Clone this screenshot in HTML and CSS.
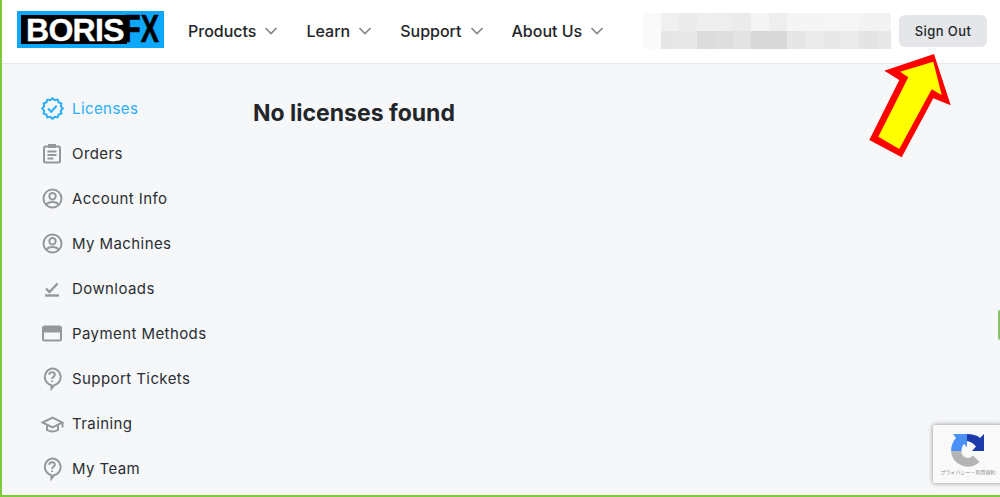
FILE: index.html
```html
<!DOCTYPE html>
<html lang="en">
<head>
  <meta charset="UTF-8">
  <title>Boris FX - Licenses</title>
  <link rel="stylesheet" href="styles.css">
</head>
<body>
  <header>
    <a class="logo" href="#"><span class="logo-boris">BORIS</span><span class="logo-fx">FX</span></a>
    <nav>
      <a href="#">Products <svg class="chev" viewBox="0 0 12 8"><path d="M.5 1l5.500 5.500L11.500 1"/></svg></a>
      <a href="#">Learn <svg class="chev" viewBox="0 0 12 8"><path d="M.5 1l5.500 5.500L11.500 1"/></svg></a>
      <a href="#">Support <svg class="chev" viewBox="0 0 12 8"><path d="M.5 1l5.500 5.500L11.500 1"/></svg></a>
      <a href="#">About Us <svg class="chev" viewBox="0 0 12 8"><path d="M.5 1l5.500 5.500L11.500 1"/></svg></a>
    </nav>
    <div class="blurred"></div>
    <button class="signout">Sign Out</button>
  </header>

  <main>
    <aside>
      <a class="side-item active" href="#">
        <svg viewBox="0 0 24 24"><polygon points="22.8,11.500 20.800,13.700 21.400,16.650 18.600,17.600 17.650,20.400 14.700,19.800 12.500,21.800 10.300,19.800 7.350,20.400 6.400,17.600 3.600,16.650 4.200,13.700 2.200,11.500 4.200,9.300 3.600,6.350 6.400,5.400 7.350,2.600 10.300,3.200 12.500,1.200 14.700,3.200 17.650,2.600 18.600,5.400 21.400,6.350 20.800,9.300"/><path d="M8 11.500l3.200 3.200 5.500-6"/></svg>
        Licenses
      </a>
      <a class="side-item" href="#">
        <svg viewBox="0 0 24 24"><rect x="4" y="4.500" width="16" height="16" rx="1.500"/><path class="thick" d="M8 4h8"/><path d="M7.500 9.500h9M7.500 13h9M7.500 16.500h6"/></svg>
        Orders
      </a>
      <a class="side-item" href="#">
        <svg viewBox="0 0 24 24"><circle cx="12.500" cy="11.500" r="9"/><circle cx="12.500" cy="9.200" r="3.200"/><path d="M6 18c1.500-2.500 4-3 6.500-3s5 .5 6.500 3"/></svg>
        Account Info
      </a>
      <a class="side-item" href="#">
        <svg viewBox="0 0 24 24"><circle cx="12.500" cy="11.500" r="9"/><circle cx="12.500" cy="9.200" r="3.200"/><path d="M6 18c1.500-2.500 4-3 6.500-3s5 .5 6.500 3"/></svg>
        My Machines
      </a>
      <a class="side-item" href="#">
        <svg class="heavy" viewBox="0 0 24 24"><path d="M6 11.500l3.500 3.500 8-8.500"/><path d="M5 18.500h14"/></svg>
        Downloads
      </a>
      <a class="side-item" href="#">
        <svg viewBox="0 0 24 24"><rect x="3" y="4.500" width="18" height="14" rx="1.500"/><path class="band" d="M3 7.500h18"/></svg>
        Payment Methods
      </a>
      <a class="side-item" href="#">
        <svg viewBox="0 0 24 24"><path d="M12 1.500a8.500 8.500 0 0 1 2 16.800l-2.500 3.200v-3.300A8.500 8.500 0 0 1 12 1.500z"/><path d="M9.300 7.800c0-3.300 5.500-3.300 5.500 0 0 2-2.700 2-2.700 4.200"/><path d="M12.100 13.500v1.500"/></svg>
        Support Tickets
      </a>
      <a class="side-item" href="#">
        <svg viewBox="0 0 24 24"><path d="M2.500 10.500l10-5 10 5-10 5z"/><path d="M7 13.500v4.500c3.500 2 7.500 2 11 0v-4.500"/><path d="M22.500 10.500v5"/></svg>
        Training
      </a>
      <a class="side-item" href="#">
        <svg viewBox="0 0 24 24"><path d="M12 1.500a8.500 8.500 0 0 1 2 16.800l-2.500 3.200v-3.300A8.500 8.500 0 0 1 12 1.500z"/><path d="M9.300 7.800c0-3.300 5.500-3.300 5.500 0 0 2-2.700 2-2.700 4.200"/><path d="M12.100 13.500v1.500"/></svg>
        My Team
      </a>
    </aside>
    <section class="content">
      <h1>No licenses found</h1>
    </section>
  </main>

  <!-- annotation arrow drawn over the screenshot -->
  <svg class="arrow" viewBox="0 0 100 110">
    <polygon fill="#ff0000" points="70,2 20.300,18.700 35.300,28 5.300,88 37.700,105.300 69.300,46.300 86.700,53.300"/>
    <polygon fill="#ffff00" points="69.300,9.700 36,19.700 44.300,25.300 14.300,84.700 35.300,97 67.700,37.300 77.700,43"/>
  </svg>

  <div class="side-tab"></div>

  <div class="recaptcha">
    <svg viewBox="0 0 36 36">
      <path fill="#b4b4b4" d="M1 20h10.500a6.500 6.500 0 0 0 11.500 4.500l6.500 6.500A17 17 0 0 1 1 20z"/>
      <path fill="#4a90f5" d="M1 20c0-5 2-10 5-13L3 3h14v13l-3-3c-1.500 1.500-2.500 4-2.500 7z"/>
      <path fill="#1c3aa9" d="M17 3c5 0 10 1 13 4l4-4v17H22l4-4.500C24 13 21 10.500 17 10z"/>
    </svg>
    <span class="recaptcha-links">プライバシー・利用規約</span>
  </div>
</body>
</html>
```

FILE: styles.css
```css
* {
  box-sizing: border-box;
  margin: 0;
  padding: 0;
}

html, body {
  height: 497px;
  overflow: hidden;
}

body {
  font-family: Inter, "Noto Sans", sans-serif;
  background: #f6f7f9;
  color: #222629;
  border-left: 2px solid #7ecb3a;
  border-bottom: 2px solid #7ecb3a;
  position: relative;
}

a {
  color: inherit;
  text-decoration: none;
}

header {
  height: 64px;
  background: #fff;
  border-bottom: 1px solid #e8e9eb;
  display: flex;
  align-items: center;
  padding-left: 15px;
  padding-bottom: 2px;
}

.logo {
  width: 147px;
  height: 37px;
  margin-bottom: 2px;
  background: #0ea8fb;
  display: flex;
  align-items: center;
  padding: 0 0 0 4px;
  font-family: "Liberation Sans", Arial, sans-serif;
  font-weight: 700;
  flex-shrink: 0;
}

.logo-boris {
  background: #000;
  color: #fff;
  width: 106px;
  height: 29px;
  line-height: 30px;
  padding-left: 5px;
  font-size: 32px;
  letter-spacing: -0.7px;
  flex-shrink: 0;
  -webkit-text-stroke: 0.4px #fff;
}

.logo-fx {
  color: #000;
  font-size: 38px;
  line-height: 29px;
  margin-left: -3px;
  transform: scaleX(0.72);
  transform-origin: left center;
  -webkit-text-stroke: 0.6px #000;
}

nav {
  display: flex;
  gap: 29px;
  margin-left: 24px;
  font-size: 16px;
  font-weight: 500;
}

nav a {
  display: flex;
  align-items: center;
  gap: 9px;
}

.chev {
  width: 12px;
  height: 8px;
  fill: none;
  stroke: #85898c;
  stroke-width: 1.6;
}

.blurred {
  width: 248px;
  height: 36px;
  margin-left: auto;
  background:
    linear-gradient(90deg, #fafafa 0 18px, #f0f0f0 18px 36px, #ebebeb 36px 54px, #efefef 54px 72px, #eeeeee 72px 90px, #ebebeb 90px 108px, #f5f5f5 108px 126px, #eeeeee 126px 144px, #f5f5f5 144px 180px, #f6f6f6 180px 216px, #f3f3f3 216px) top / 100% 50% no-repeat,
    linear-gradient(90deg, #fafafa 0 18px, #e6e6e6 18px 36px, #e8e8e8 36px 54px, #dcdcdc 54px 72px, #dedede 72px 90px, #e3e3e3 90px 108px, #d8d8d8 108px 144px, #e6e6e6 144px 162px, #ebebeb 162px 180px, #e8e8e8 180px 198px, #ebebeb 198px 216px, #e4e4e4 216px 234px, #e8e8e8 234px) bottom / 100% 50% no-repeat;
}

.signout {
  width: 88px;
  height: 32px;
  margin-left: 8px;
  margin-right: 13px;
  border: none;
  border-radius: 6px;
  background: #e5e6e9;
  color: #222629;
  font-family: inherit;
  font-size: 13px;
  font-weight: 500;
  letter-spacing: 0.4px;
}

main {
  display: flex;
}

aside {
  width: 251px;
  padding: 22px 0 0 38px;
  flex-shrink: 0;
}

.side-item {
  display: flex;
  align-items: center;
  gap: 8px;
  height: 45px;
  font-size: 15px;
  letter-spacing: 0.42px;
  color: #2a2e33;
  white-space: nowrap;
}

.side-item svg {
  width: 24px;
  height: 24px;
  flex-shrink: 0;
  fill: none;
  stroke: #95989b;
  stroke-width: 2;
}

.side-item svg.heavy {
  stroke-width: 2.4;
}

.side-item .thick {
  stroke-width: 4;
}

.side-item .band {
  stroke-width: 6;
}

.side-item.active {
  color: #2aaef9;
}

.side-item.active svg {
  stroke: #2aaef9;
}

.content {
  padding-top: 33px;
}

h1 {
  font-size: 23px;
  font-weight: 700;
  line-height: 32px;
  color: #222629;
}

.arrow {
  position: absolute;
  left: 862px;
  top: 52px;
  width: 100px;
  height: 110px;
}

.side-tab {
  position: absolute;
  right: 0;
  top: 310px;
  width: 2px;
  height: 30px;
  background: #8bc06a;
  border-radius: 2px 0 0 2px;
}

.recaptcha {
  position: absolute;
  left: 931px;
  top: 425px;
  width: 70px;
  height: 58px;
  background: #f9f9f9;
  box-shadow: 0 0 5px rgba(0, 0, 0, 0.45);
  border-radius: 2px 0 0 2px;
  display: flex;
  flex-direction: column;
  align-items: center;
  padding-top: 6px;
}

.recaptcha svg {
  width: 36px;
  height: 36px;
  flex-shrink: 0;
}

.recaptcha-links {
  font-family: "Noto Sans CJK JP", sans-serif;
  font-size: 5px;
  line-height: 10px;
  color: #8a8a8a;
  white-space: nowrap;
}
```
